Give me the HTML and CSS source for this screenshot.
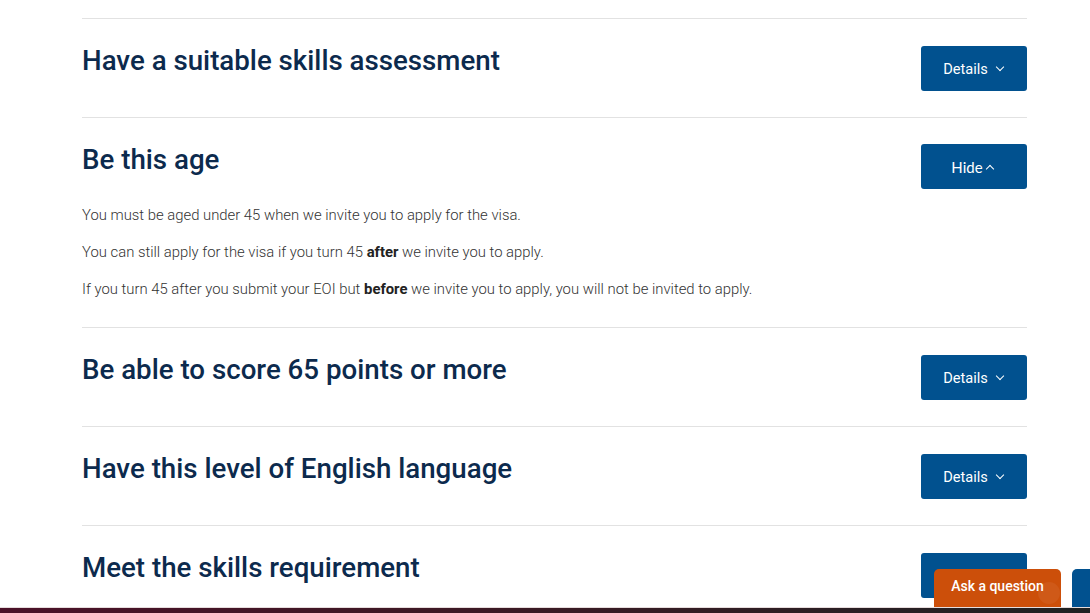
FILE: index.html
```html
<!DOCTYPE html>
<html>
<head>
  <title>Eligibility</title>
  <meta charset=utf-8>
  <meta name="viewport" content="width=device-width, initial-scale=1" />
  <link rel="stylesheet" href="styles.css">
</head>
<body>

  <div id=reqs>
    <div class="req">
      <div class="req-head">
        <h2>Have a suitable skills assessment</h2>
        <button class="toggle">Details <span class="chev down"></span></button>
      </div>
    </div>

    <div class="req open">
      <div class="req-head">
        <h2>Be this age</h2>
        <button class="toggle hide">Hide <span class="chev up"></span></button>
      </div>
      <div class="req-body">
        <p>You must be aged under 45 when we invite you to apply for the visa.</p>
        <p>You can still apply for the visa if you turn 45 <b>after</b> we invite you to apply.</p>
        <p>If you turn 45 after you submit your EOI but <b>before</b> we invite you to apply, you will not be invited to apply.</p>
      </div>
    </div>

    <div class="req">
      <div class="req-head">
        <h2>Be able to score 65 points or more</h2>
        <button class="toggle">Details <span class="chev down"></span></button>
      </div>
    </div>

    <div class="req">
      <div class="req-head">
        <h2>Have this level of English language</h2>
        <button class="toggle">Details <span class="chev down"></span></button>
      </div>
    </div>

    <div class="req">
      <div class="req-head">
        <h2>Meet the skills requirement</h2>
        <button class="toggle">Details <span class="chev down"></span></button>
      </div>
    </div>
  </div>

  <div id=ask>
    <button class="ask">Ask a question</button>
    <span class="ask-badge"></span>
    <button class="ask-side"></button>
  </div>
  <div id=bottom-bar></div>

</body>
</html>
```

FILE: styles.css
```css
* {
  box-sizing: border-box;
}
html {
  background: #fff;
  color: #333;
  font-family: Roboto, "Liberation Sans", sans-serif;
}
body {
  margin: 0;
  height: 613px;
  overflow: hidden;
}

#reqs {
  width: 945px;
  margin: 18px 0 0 82px;
}
.req {
  border-top: 1px solid #e2e2e2;
  padding: 24px 0 26px;
}
.req.open {
  padding-bottom: 27px;
}
.req-head {
  display: flex;
  justify-content: space-between;
  align-items: flex-start;
}
.req-head h2 {
  margin: 0;
  font-size: 27.7px;
  line-height: 36px;
  font-weight: 500;
  color: #0c2a4d;
}
.toggle {
  margin-top: 3px;
  width: 106px;
  height: 45px;
  border: 0;
  border-radius: 3px;
  background: #01518f;
  color: #fff;
  font-family: Roboto, sans-serif;
  font-size: 14.6px;
  cursor: pointer;
  display: flex;
  align-items: center;
  justify-content: center;
  gap: 9px;
  padding: 0 2px 0 0;
}
.toggle.hide {
  margin-top: 2px;
  font-family: Lato, sans-serif;
  font-size: 15px;
  gap: 4px;
  padding: 0 4px 0 0;
}
.chev {
  display: inline-block;
  width: 6px;
  height: 6px;
  border-right: 1.6px solid #fff;
  border-bottom: 1.6px solid #fff;
}
.chev.down {
  transform: translateY(-2px) rotate(45deg);
}
.chev.up {
  transform: translateY(2px) rotate(-135deg);
}

.req-body {
  padding-top: 15px;
}
.req-body p {
  margin: 0 0 15px;
  font-size: 14.85px;
  line-height: 22px;
  font-weight: 300;
  color: #333;
}
.req-body p:last-child {
  margin-bottom: 0;
}
.req-body b {
  font-weight: 700;
  color: #222;
}

#ask {
  position: fixed;
  right: 0;
  bottom: 6px;
  display: flex;
  align-items: flex-end;
}
.ask {
  width: 127px;
  height: 38px;
  border: 0;
  border-radius: 5px 5px 0 0;
  background: #cc4f0a;
  color: #fff;
  font-family: Roboto, sans-serif;
  font-weight: 500;
  font-size: 14px;
  padding: 0 0 4px;
  margin-right: 11px;
}
.ask-badge {
  position: absolute;
  left: 104px;
  bottom: 3px;
  width: 22px;
  height: 22px;
  border-radius: 50%;
  background: rgba(255, 255, 255, .06);
}
.ask-side {
  width: 18px;
  height: 38px;
  border: 0;
  border-radius: 5px 0 0 0;
  background: #01518f;
}
#bottom-bar {
  position: fixed;
  left: 0;
  right: 0;
  bottom: 0;
  height: 6px;
  border-top: 1px solid #e6dcdc;
  background: linear-gradient(90deg, #4b1128, #3a1a24 50%, #1f2222);
}
```
